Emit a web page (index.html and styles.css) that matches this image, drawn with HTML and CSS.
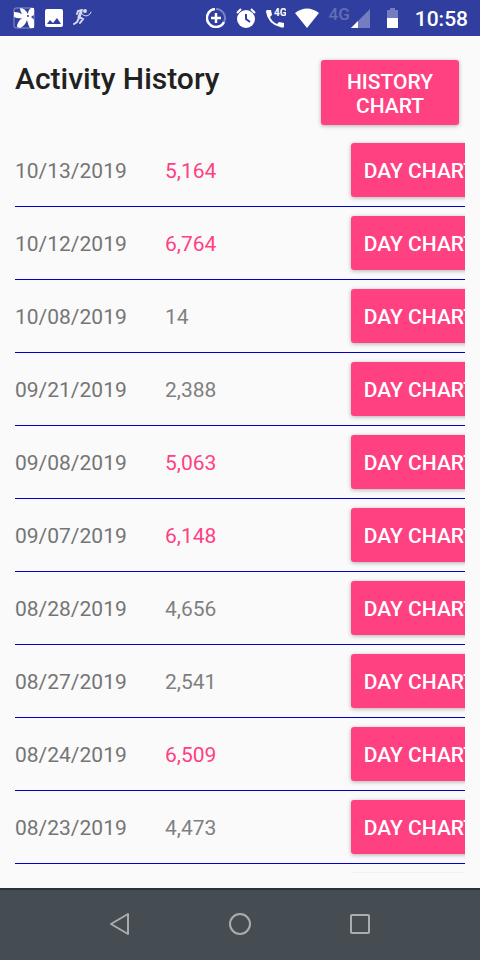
FILE: index.html
```
<!DOCTYPE html>
<html lang="en">
<head>
    <meta charset="UTF-8">
    <meta name="viewport" content="width=device-width, initial-scale=1.0">
    <title>Activity History</title>
    <link rel="stylesheet" href="styles.css">
</head>
<body>
    <header class="status-bar">
        <div class="notifications">
            <svg width="22" height="22" viewBox="0 0 22 22">
                <rect x="1" y="1" width="20" height="20" rx="2" fill="#303f9f" stroke="#8c94cb" stroke-width="1"/>
                <path d="M7 1q5 0 8 6q0-4 3-6h3v7q-2 1-3 2q2 1 3 3v8h-4q-2-3-3-8q-2 6-7 8l-3-1q0-5 5-9q-4 1-8-1V5q5 0 8 2q-2-3-2-6z" fill="#fff"/>
                <circle cx="15" cy="9" r="1" fill="#303f9f"/>
            </svg>
            <svg width="18" height="18" viewBox="0 0 18 18">
                <rect width="18" height="18" rx="2" fill="#fff"/>
                <path d="M2 15l3-4 3 3 4-5 4 6z" fill="#303f9f"/>
            </svg>
            <svg width="20" height="18" viewBox="0 0 20 18" fill="none" stroke="#d5d8ee" stroke-linecap="round">
                <path d="M8 3L6 8" stroke-width="3"/>
                <path d="M4 5l1-3 4-1M6 8l4 2-3 4M6 9l-2 4-3 2" stroke-width="2"/>
                <path d="M9 5q4 4 8 0l1-2" stroke-width="1"/>
                <circle cx="12" cy="2" r="1" stroke-width="2"/>
            </svg>
        </div>
        <div class="indicators">
            <svg class="data-saver" width="20" height="20" viewBox="0 0 20 20" fill="none" stroke-width="2">
                <path d="M10 1a9 9 0 0 1 8 13" stroke="#7b84c1"/>
                <path d="M9 1a9 9 0 1 0 9 13M10 5v10M5 10h10" stroke="#fff" stroke-width="2.5"/>
            </svg>
            <svg class="alarm" width="20" height="20" viewBox="0 0 20 20">
                <circle cx="10" cy="11" r="9" fill="#fff"/>
                <path d="M1 5l4-4M19 5l-4-4" stroke="#fff" stroke-width="2"/>
                <path d="M10 6v5l4 3" fill="none" stroke="#303f9f" stroke-width="2"/>
            </svg>
            <svg class="call" width="20" height="20" viewBox="0 0 20 20">
                <path d="M1 2h4l1 5-2 2q2 5 7 7l2-2 5 1v4q-1 1-4 0Q2 16 0 4q0-2 1-2z" fill="#fff"/>
                <text x="8" y="8" class="call-network">4G</text>
            </svg>
            <svg class="wifi" width="26" height="20" viewBox="0 0 26 20">
                <path d="M1 5q12-9 24 0L13 20z" fill="#fff"/>
            </svg>
            <span class="network">4G</span>
            <svg class="signal" width="19" height="19" viewBox="0 0 19 19">
                <path d="M0 19L19 0v19z" fill="#747dbd"/>
                <path d="M0 19l7-7v7z" fill="#fff"/>
            </svg>
            <svg class="battery" width="11" height="20" viewBox="0 0 11 20">
                <path d="M3 0h5v2h3v8H0V2h3z" fill="#747dbd"/>
                <path d="M0 10h11v10H0z" fill="#fff"/>
            </svg>
            <span class="clock">10:58</span>
        </div>
    </header>

    <main>
        <div class="page-header">
            <h1>Activity History</h1>
            <button type="button" class="history-btn">HISTORY CHART</button>
        </div>
        <div class="history">
            <table>
                <tbody>
                    <tr>
                        <td class="date">10/13/2019</td>
                        <td class="steps goal">5,164</td>
                        <td class="action"><button type="button">DAY CHART</button></td>
                    </tr>
                    <tr>
                        <td class="date">10/12/2019</td>
                        <td class="steps goal">6,764</td>
                        <td class="action"><button type="button">DAY CHART</button></td>
                    </tr>
                    <tr>
                        <td class="date">10/08/2019</td>
                        <td class="steps">14</td>
                        <td class="action"><button type="button">DAY CHART</button></td>
                    </tr>
                    <tr>
                        <td class="date">09/21/2019</td>
                        <td class="steps">2,388</td>
                        <td class="action"><button type="button">DAY CHART</button></td>
                    </tr>
                    <tr>
                        <td class="date">09/08/2019</td>
                        <td class="steps goal">5,063</td>
                        <td class="action"><button type="button">DAY CHART</button></td>
                    </tr>
                    <tr>
                        <td class="date">09/07/2019</td>
                        <td class="steps goal">6,148</td>
                        <td class="action"><button type="button">DAY CHART</button></td>
                    </tr>
                    <tr>
                        <td class="date">08/28/2019</td>
                        <td class="steps">4,656</td>
                        <td class="action"><button type="button">DAY CHART</button></td>
                    </tr>
                    <tr>
                        <td class="date">08/27/2019</td>
                        <td class="steps">2,541</td>
                        <td class="action"><button type="button">DAY CHART</button></td>
                    </tr>
                    <tr>
                        <td class="date">08/24/2019</td>
                        <td class="steps goal">6,509</td>
                        <td class="action"><button type="button">DAY CHART</button></td>
                    </tr>
                    <tr>
                        <td class="date">08/23/2019</td>
                        <td class="steps">4,473</td>
                        <td class="action"><button type="button">DAY CHART</button></td>
                    </tr>
                </tbody>
            </table>
            <div class="next-row"></div>
        </div>
    </main>

    <nav class="nav-bar">
        <button type="button" aria-label="Back">
            <svg width="24" height="24" viewBox="0 0 24 24"><path d="M3 12l17-10v20z"/></svg>
        </button>
        <button type="button" aria-label="Home">
            <svg width="24" height="24" viewBox="0 0 24 24"><circle cx="12" cy="12" r="10"/></svg>
        </button>
        <button type="button" aria-label="Recent apps">
            <svg width="24" height="24" viewBox="0 0 24 24"><rect x="3" y="3" width="18" height="18" rx="1"/></svg>
        </button>
    </nav>
</body>
</html>
```
FILE: styles.css
```
* {
    margin: 0;
    padding: 0;
    box-sizing: border-box;
    font-family: Roboto, Arial, sans-serif;
}

body {
    display: flex;
    flex-direction: column;
    min-height: 100vh;
    background: #fafafa;
}

svg {
    display: block;
}

.status-bar {
    display: flex;
    justify-content: space-between;
    align-items: center;
    height: 36px;
    padding: 0 12px 0 13px;
    background: #303f9f;
    color: white;
}

.notifications,
.indicators {
    display: flex;
    align-items: center;
}

.notifications {
    gap: 10px;
}

.data-saver,
.alarm {
    margin-right: 10px;
}

.call,
.wifi {
    margin-right: 8px;
}

.call-network {
    font-size: 10px;
    font-weight: 700;
    fill: white;
}

.network {
    margin-right: 1px;
    padding-bottom: 8px;
    font-size: 17px;
    line-height: 20px;
    font-weight: 500;
    color: #636eb6;
}

.signal,
.battery {
    margin-right: 17px;
}

.clock {
    font-size: 21px;
    font-weight: 500;
    padding-top: 2px;
}

main {
    flex: 1;
    padding: 24px 15px 15px;
}

.page-header {
    display: flex;
    justify-content: space-between;
    align-items: flex-start;
    padding-right: 6px;
    margin-bottom: 9px;
}

h1 {
    font-size: 30px;
    line-height: 38px;
    font-weight: 500;
    color: #212121;
}

main button {
    width: 138px;
    padding: 2px 12px 0;
    background: #ff4081;
    color: white;
    border: none;
    border-radius: 3px;
    font-size: 21px;
    line-height: 24px;
    font-weight: 500;
    cursor: pointer;
    box-shadow: 0 1px 4px rgba(0, 0, 0, 0.3);
}

.history-btn {
    height: 65px;
}

.history {
    overflow: hidden;
}

table {
    width: 100%;
    table-layout: fixed;
    border-spacing: 0;
}

td {
    height: 73px;
    padding-top: 2px;
    border-bottom: 1px solid #0000c8;
    font-size: 21px;
    color: #757575;
}

.date {
    width: 150px;
}

.steps {
    color: #808080;
}

.steps.goal {
    color: #ff4081;
}

.action {
    width: 114px;
    padding-top: 0;
}

.action button {
    display: block;
    height: 54px;
    padding: 2px 0 0;
    white-space: nowrap;
}

/* top edge of the row below the fold */
.next-row {
    width: 113px;
    margin: 8px 0 0 auto;
    border-top: 1px solid #f2f2f2;
}

.nav-bar {
    display: flex;
    justify-content: center;
    gap: 96px;
    height: 72px;
    padding-bottom: 2px;
    border-top: 2px solid #2b3435;
    background: #454d53;
}

.nav-bar button {
    background: none;
    border: none;
    cursor: pointer;
}

.nav-bar svg {
    fill: none;
    stroke: #a9adb0;
    stroke-width: 2;
    stroke-linejoin: round;
}
```
